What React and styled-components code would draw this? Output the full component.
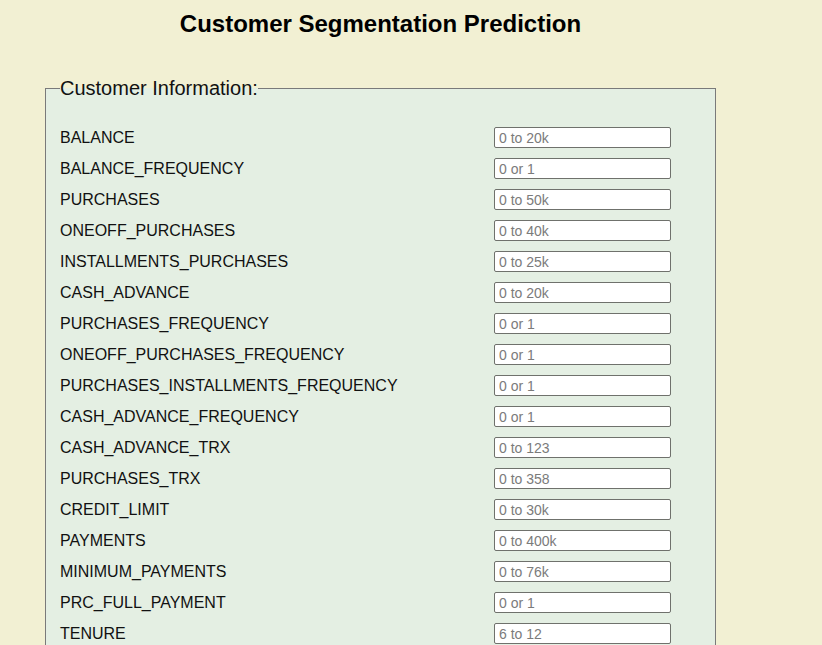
import styled, { createGlobalStyle } from "styled-components";

const fields = [
    ["BALANCE", "0 to 20k"],
    ["BALANCE_FREQUENCY", "0 or 1"],
    ["PURCHASES", "0 to 50k"],
    ["ONEOFF_PURCHASES", "0 to 40k"],
    ["INSTALLMENTS_PURCHASES", "0 to 25k"],
    ["CASH_ADVANCE", "0 to 20k"],
    ["PURCHASES_FREQUENCY", "0 or 1"],
    ["ONEOFF_PURCHASES_FREQUENCY", "0 or 1"],
    ["PURCHASES_INSTALLMENTS_FREQUENCY", "0 or 1"],
    ["CASH_ADVANCE_FREQUENCY", "0 or 1"],
    ["CASH_ADVANCE_TRX", "0 to 123"],
    ["PURCHASES_TRX", "0 to 358"],
    ["CREDIT_LIMIT", "0 to 30k"],
    ["PAYMENTS", "0 to 400k"],
    ["MINIMUM_PAYMENTS", "0 to 76k"],
    ["PRC_FULL_PAYMENT", "0 or 1"],
    ["TENURE", "6 to 12"],
];

const App = () => {
    return (
        <>
            <GlobalStyle />
            <Page>
                <Title>Customer Segmentation Prediction</Title>
                <Form onSubmit={(e) => e.preventDefault()}>
                    <Fieldset>
                        <Legend>Customer Information:</Legend>
                        <Rows>
                            {fields.map(([name, hint]) => (
                                <Row key={name}>
                                    <Label htmlFor={name}>{name}</Label>
                                    <Input id={name} name={name} type="text" placeholder={hint} />
                                </Row>
                            ))}
                        </Rows>
                        <SubmitRow>
                            <Submit type="submit">Predict</Submit>
                        </SubmitRow>
                    </Fieldset>
                </Form>
            </Page>
        </>
    );
};

export default App;

const GlobalStyle = createGlobalStyle`
body {
    margin: 0;
    background-color: #F2F0D3;
    font-family: "Liberation Sans", Arial, sans-serif;
}
`;

const Page = styled.div`
width: 671px;
margin-left: 45px;
`;

const Title = styled.h1`
margin: 10px 0 0 0;
font-size: 24px;
line-height: 28px;
font-weight: 700;
text-align: center;
color: #000;
`;

const Form = styled.form`
margin-top: 39px;
`;

const Fieldset = styled.fieldset`
margin: 0;
padding: 27px 14px 20px 14px;
border: 1px solid #7a7a7a;
background-color: #E4EFE3;
box-sizing: border-box;
width: 671px;
`;

const Legend = styled.legend`
padding: 0;
font-size: 20px;
line-height: 23px;
color: #111;
`;

const Rows = styled.div`
display: flex;
flex-direction: column;
gap: 10px;
`;

const Row = styled.div`
display: grid;
grid-template-columns: 434px 177px;
align-items: center;
height: 21px;
`;

const Label = styled.label`
font-size: 16px;
line-height: 18px;
color: #111;
`;

const Input = styled.input`
box-sizing: border-box;
width: 177px;
height: 21px;
padding: 1px 4px;
border: 1px solid #6f716c;
border-radius: 2px;
background: #fff;
font-family: "Liberation Sans", Arial, sans-serif;
font-size: 14px;
color: #222;

&::placeholder {
    color: #7b7b7b;
}
`;

const SubmitRow = styled.div`
margin-top: 20px;
`;

const Submit = styled.button`
font-family: "Liberation Sans", Arial, sans-serif;
font-size: 14px;
padding: 3px 12px;
`;
